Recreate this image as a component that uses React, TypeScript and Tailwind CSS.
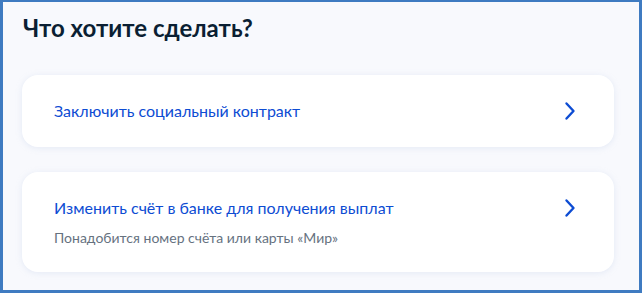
import React from "react";

function Chevron() {
  return (
    <svg width="24" height="24" viewBox="0 0 24 24" fill="none" className="shrink-0">
      <path d="M8.5 4.5L15.5 12L8.5 19.5" stroke="#0d4cd3" strokeWidth="2.4" strokeLinecap="round" strokeLinejoin="round" />
    </svg>
  );
}

export default function App() {
  return (
    <div
      className="w-[642px] h-[293px] overflow-hidden bg-[#3f7bc1] pl-[3px] pt-[2px] pr-[3px] pb-[3px]"
      style={{ fontFamily: "Lato, 'Noto Sans', sans-serif" }}
    >
      <div className="h-full bg-[#f8f9fd] pl-[19px] pr-[25px]">
        <h1 className="pt-[10px] pl-[1px] text-[24px] leading-[32px] font-bold text-[#0b1f33]">
          Что хотите сделать?
        </h1>
        <div className="mt-[31px] flex flex-col gap-[25px]">
          <div className="flex items-center justify-between rounded-[16px] bg-white px-[32px] py-[24px] shadow-[0_1px_6px_rgba(170,190,225,0.25)]">
            <span className="text-[16px] leading-[24px] text-[#0d4cd3]">Заключить социальный контракт</span>
            <Chevron />
          </div>
          <div className="flex items-start justify-between rounded-[16px] bg-white px-[32px] py-[24px] shadow-[0_1px_6px_rgba(170,190,225,0.25)]">
            <div className="flex flex-col">
              <span className="text-[16px] leading-[24px] text-[#0d4cd3]">Изменить счёт в банке для получения выплат</span>
              <span className="mt-[8px] text-[14px] leading-[20px] text-[#66727f]">Понадобится номер счёта или карты «Мир»</span>
            </div>
            <Chevron />
          </div>
        </div>
      </div>
    </div>
  );
}
